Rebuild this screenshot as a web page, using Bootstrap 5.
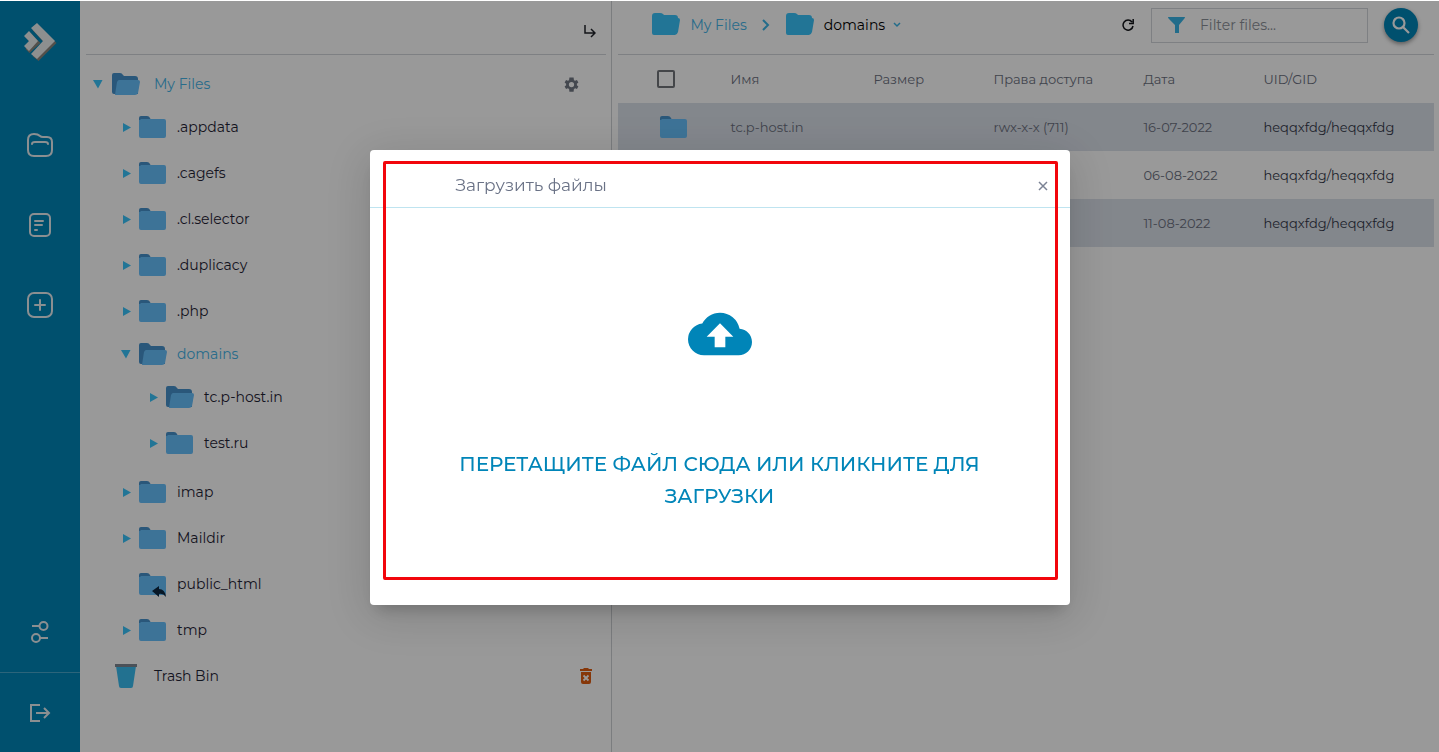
<!DOCTYPE html>
<html lang="ru">
<head>
<meta charset="utf-8">
<meta name="viewport" content="width=device-width, initial-scale=1">
<title>File Manager</title>
<link href="https://cdn.jsdelivr.net/npm/bootstrap@5.3.0/dist/css/bootstrap.min.css" rel="stylesheet">
<style>
:root{--brand:#0085b8;--sky:#3ac4fa;--link:#45b4e8;--ink:#1f2335;--muted:#6b7080;--rule:#d3d6da}
body{font-family:Montserrat,Inter,"Open Sans",sans-serif;font-size:14px;line-height:20px;color:var(--ink);background:#fff}
a{color:inherit;text-decoration:none}
svg{display:block;flex:none}
.app-shell{min-height:100vh;border-top:1px solid #fff}
.rail{width:80px;background:var(--brand);color:#e8eef2;flex:none}
.rail a{display:flex;justify-content:center;align-items:center;height:80px}
.rail .rail-exit{border-top:1px solid #4aa9cd}
.tree-pane{flex:0 0 37%;min-width:0;border-right:1px solid #cdd0d4}
.files-pane{flex:1 1 0;min-width:0;padding:0 5px 0 6px}
.pane-head{height:54px;border-bottom:1px solid var(--rule)}
.tree-pane .pane-head{margin:0 5px 0 6px;padding:8px 10px 0 0}
.tree{padding-top:9px}
.tree-row{display:flex;align-items:center;height:46px}
.tree-row.opened{height:40px;color:var(--link)}
.twist{width:12px;height:12px;padding:0;border:0;background:none;color:var(--sky);flex:none;margin-right:7px}
.folder-ico{margin-right:10px}
.folder-ico.is-open{margin-right:9px}
.root-row{padding:0 32px 0 12px}
.root-row .twist{margin-right:8px}
.root-row .folder-ico{margin-right:13px}
.tree .branch{padding-left:40px}
.tree .sub-branch{padding:0 0 3px 27px}
.trash-row{padding:0 19px 0 35px}
.trash-row a{margin-left:17px}
.icon-btn{border:0;background:none;padding:0;color:inherit}
.crumbs{padding:0 0 6px 34px}
.crumbs a{margin-left:9px}
.crumb-root{color:var(--link)}
.crumb-sep{margin:0 16px 0 15px}
.crumb-here{color:#000;margin-right:8px}
.tools{padding:0 16px 5px 0}
.reload-btn{margin-right:17px}
.filter-box{width:217px;height:35px;border:1px solid var(--rule);padding-left:12px}
.filter-box input{border:0;outline:0;background:none;width:150px;font-size:14px;color:#666}
.filter-box input::placeholder{color:#8b9098;opacity:1}
.search-btn{width:34px;height:34px;border-radius:50%;background:var(--brand);color:#fff;margin-left:16px;box-shadow:0 2px 4px rgba(0,0,0,.4)}
.file-table{width:100%;table-layout:fixed;font-size:13px}
.file-table th{font-weight:400}
.file-table th,.file-table td{height:48px;padding:0;color:var(--muted);vertical-align:middle;white-space:nowrap}
.file-table td:last-child{color:#333849}
.file-table tbody tr:nth-child(odd){background:#dbe1ea}
.file-table .form-check-input{width:18px;height:18px;margin:0 0 0 39px;border:2px solid #72757b;border-radius:2px;display:block}
.row-ico{margin-left:42px}
.c-pick{width:112px}.c-name{width:143px}.c-size,.c-date{width:120px}.c-mode{width:150px}
.shade{position:fixed;inset:1px 0 0;background:rgba(0,0,0,.4)}
.upload-modal{--bs-modal-width:700px;display:block}
.upload-modal .modal-content{border:0;border-radius:4px;margin-top:3px;box-shadow:0 11px 15px -7px rgba(0,0,0,.2),0 9px 46px 8px rgba(0,0,0,.12)}
.upload-modal .modal-header{height:58px;border-bottom:1px solid #bfe4f0;padding:12px 22px 0 86px}
.upload-modal .modal-title{font-size:17px;line-height:24px;font-weight:400;color:#6a7286}
.upload-modal .icon-btn{margin-top:3px}
.drop-area{display:flex;flex-direction:column;align-items:center;width:100%;height:397px;border:0;background:none;padding:94px 80px 0;font-size:20px;line-height:32px;font-weight:500;color:var(--brand)}
.drop-area svg{margin-bottom:82px}
.marker-frame{position:absolute;inset:11px 12px 25px 13px;border:3px solid #f2060c;border-radius:2px;pointer-events:none}
</style>
</head>
<body>
<svg width="0" height="0" class="position-absolute" aria-hidden="true">
<symbol id="folder" viewBox="0 0 28 23"><path fill="#4692cc" d="M2 0h6q2 0 3 2l1 2v8H0V2q0-2 2-2z"/><path fill="#67c0fc" d="M0 4h1l1-1h23q2 0 2 2v15q0 2-2 2H2q-2 0-2-2z"/></symbol>
<symbol id="folder-open" viewBox="0 0 29 23"><path fill="#4692cc" d="M2 0h6q2 0 3 2l1 1h11q3 0 3 3v15H2q-2 0-2-2V2q0-2 2-2z"/><path fill="#67c0fc" d="M7 7h19q2 0 2 2l-2 11q-1 2-3 2H3l2-13q1-2 2-2z"/></symbol>
<symbol id="folder-flat" viewBox="0 0 29 23"><path fill="#3ac4fa" d="M3 0h5q2 0 3 1l1 1h11q3 0 3 3 2 0 2 2l-2 12q-1 3-3 3H2q-2 0-2-2V3q0-3 3-3z"/></symbol>
<symbol id="tri-r" viewBox="0 0 12 12"><path fill="currentColor" d="M3 2l8 4.500-8 4.500z"/></symbol>
<symbol id="tri-d" viewBox="0 0 12 12"><path fill="currentColor" d="M1 2h9.500L6 10.500z"/></symbol>
</svg>
<div class="app-shell d-flex">
  <nav class="rail d-flex flex-column" aria-label="Разделы">
    <a href="#" aria-label="DirectAdmin"><svg width="34" height="40" viewBox="0 0 34 40"><g fill="#8b857e" transform="translate(1.500 2)"><path d="M8 7l6-5 18 18-18 18-6-5 12-13zM1 14l4-5 11 11L5 30l-4-4 5-6z"/></g><g fill="#eceeef"><path d="M8 7l6-5 18 18-18 18-6-5 12-13zM1 15l5-5 9 10-9 10-5-5 5-5z"/></g></svg></a>
    <a href="#" class="mt-4" aria-label="Файлы"><svg width="26" height="24" viewBox="0 0 26 24" fill="none" stroke="currentColor" stroke-width="2" stroke-linecap="round"><path d="M1 7q0-6 6-6 4 0 6 2 1 1 3 1h4q5 0 5 5v8q0 6-6 6H7q-6 0-6-6zM5 11q0-2 3-2h10q3 0 3 2"/></svg></a>
    <a href="#" aria-label="Редактор"><svg width="22" height="24" viewBox="0 0 22 24" fill="none" stroke="currentColor" stroke-width="2" stroke-linecap="round"><rect x="1" y="1" width="20" height="22" rx="4"/><path d="M6 8h8M6 12h7M6 17h2"/></svg></a>
    <a href="#" aria-label="Создать"><svg width="26" height="26" viewBox="0 0 26 26" fill="none" stroke="currentColor" stroke-width="2" stroke-linecap="round"><rect x="1" y="1" width="24" height="24" rx="6"/><path d="M13 8v10M8 13h10"/></svg></a>
    <a href="#" class="mt-auto" aria-label="Настройки"><svg width="18" height="24" viewBox="0 0 18 24" fill="none" stroke="currentColor" stroke-width="2"><circle cx="12.500" cy="6" r="4"/><circle cx="5" cy="18" r="4"/><path d="M1 6h7M9 18h8"/></svg></a>
    <a href="#" class="rail-exit" aria-label="Выход"><svg width="22" height="20" viewBox="0 0 22 20" fill="none" stroke="currentColor" stroke-width="2"><path d="M11 2H2v16h9M7 10h13M15 5l5 5-5 5"/></svg></a>
  </nav>

  <aside class="tree-pane">
    <div class="pane-head d-flex justify-content-end align-items-center">
      <button class="icon-btn" aria-label="Свернуть дерево"><svg width="13" height="13" viewBox="0 0 13 13" fill="none" stroke="#20232a" stroke-width="1.500"><path d="M2 0v8h9M8 4l4 4-4 4"/></svg></button>
    </div>
    <div class="tree">
      <div class="tree-row opened root-row"><button class="twist" aria-label="Свернуть"><svg width="12" height="12"><use href="#tri-d"/></svg></button><svg class="folder-ico is-open" width="29" height="23"><use href="#folder-open"/></svg><a href="#">My Files</a>
        <button class="icon-btn ms-auto" aria-label="Параметры"><svg width="15" height="15" viewBox="2 2 20 20"><path fill="#727884" d="M19.140 12.940a7 7 0 0 0 0-1.880l2.030-1.580-1.920-3.320-2.390.96a7 7 0 0 0-1.620-.94L14.800 2.500H9.200l-.44 3.680a7 7 0 0 0-1.620.94l-2.390-.96-1.920 3.320 2.030 1.580a7 7 0 0 0 0 1.880l-2.030 1.580 1.920 3.320 2.390-.96a7 7 0 0 0 1.620.94l.44 3.680h5.600l.44-3.680a7 7 0 0 0 1.620-.94l2.390.96 1.920-3.320zM12 15.500a3.500 3.500 0 1 1 0-7 3.500 3.500 0 0 1 0 7z"/></svg></button></div>
      <ul class="list-unstyled mb-0 branch">
        <li class="tree-row"><button class="twist" aria-label="Развернуть"><svg width="12" height="12"><use href="#tri-r"/></svg></button><svg class="folder-ico" width="28" height="23"><use href="#folder"/></svg><a href="#">.appdata</a></li>
        <li class="tree-row"><button class="twist" aria-label="Развернуть"><svg width="12" height="12"><use href="#tri-r"/></svg></button><svg class="folder-ico" width="28" height="23"><use href="#folder"/></svg><a href="#">.cagefs</a></li>
        <li class="tree-row"><button class="twist" aria-label="Развернуть"><svg width="12" height="12"><use href="#tri-r"/></svg></button><svg class="folder-ico" width="28" height="23"><use href="#folder"/></svg><a href="#">.cl.selector</a></li>
        <li class="tree-row"><button class="twist" aria-label="Развернуть"><svg width="12" height="12"><use href="#tri-r"/></svg></button><svg class="folder-ico" width="28" height="23"><use href="#folder"/></svg><a href="#">.duplicacy</a></li>
        <li class="tree-row"><button class="twist" aria-label="Развернуть"><svg width="12" height="12"><use href="#tri-r"/></svg></button><svg class="folder-ico" width="28" height="23"><use href="#folder"/></svg><a href="#">.php</a></li>
        <li><div class="tree-row opened"><button class="twist" aria-label="Свернуть"><svg width="12" height="12"><use href="#tri-d"/></svg></button><svg class="folder-ico is-open" width="29" height="23"><use href="#folder-open"/></svg><a href="#">domains</a></div>
          <ul class="list-unstyled mb-0 sub-branch">
            <li class="tree-row"><button class="twist" aria-label="Развернуть"><svg width="12" height="12"><use href="#tri-r"/></svg></button><svg class="folder-ico is-open" width="29" height="23"><use href="#folder-open"/></svg><a href="#">tc.p-host.in</a></li>
            <li class="tree-row"><button class="twist" aria-label="Развернуть"><svg width="12" height="12"><use href="#tri-r"/></svg></button><svg class="folder-ico" width="28" height="23"><use href="#folder"/></svg><a href="#">test.ru</a></li>
          </ul></li>
        <li class="tree-row"><button class="twist" aria-label="Развернуть"><svg width="12" height="12"><use href="#tri-r"/></svg></button><svg class="folder-ico" width="28" height="23"><use href="#folder"/></svg><a href="#">imap</a></li>
        <li class="tree-row"><button class="twist" aria-label="Развернуть"><svg width="12" height="12"><use href="#tri-r"/></svg></button><svg class="folder-ico" width="28" height="23"><use href="#folder"/></svg><a href="#">Maildir</a></li>
        <li class="tree-row"><span class="twist"></span><svg class="folder-ico" width="28" height="25" viewBox="0 -1 28 25"><use href="#folder" width="28" height="23"/><path fill="#0c2740" d="M13 18l7-5v3q6 0 7 8-3-4-7-3v3z"/></svg><a href="#">public_html</a></li>
        <li class="tree-row"><button class="twist" aria-label="Развернуть"><svg width="12" height="12"><use href="#tri-r"/></svg></button><svg class="folder-ico" width="28" height="23"><use href="#folder"/></svg><a href="#">tmp</a></li>
      </ul>
      <div class="tree-row trash-row"><svg width="22" height="24" viewBox="0 0 22 24"><path fill="#3abdf0" d="M1 2h20l-3 20q0 2-2 2H6q-2 0-2-2z"/><path fill="#7d8793" d="M0 0h22v3H0z"/></svg><a href="#">Trash Bin</a>
        <button class="icon-btn ms-auto" aria-label="Очистить корзину"><svg width="12" height="17" viewBox="0 0 12 17"><path fill="#e05c10" d="M0 1h3l1-1h4l1 1h3v2H0zM1 4h10v10q0 2-2 2H3q-2 0-2-2z"/><path stroke="#fff" stroke-width="1.800" d="M3.500 7.500l5 5m0-5l-5 5"/></svg></button></div>
    </div>
  </aside>

  <main class="files-pane">
    <div class="pane-head d-flex align-items-center">
      <div class="crumbs d-flex align-items-center">
        <svg width="29" height="23"><use href="#folder-flat"/></svg><a class="crumb-root" href="#">My Files</a>
        <svg class="crumb-sep" width="8" height="12" viewBox="0 0 8 12" fill="none" stroke="#3ab5e6" stroke-width="2"><path d="M1 1l5 5-5 5"/></svg>
        <svg width="29" height="23"><use href="#folder-flat"/></svg><a class="crumb-here" href="#">domains</a>
        <svg width="8" height="6" viewBox="0 0 8 6" fill="none" stroke="#3ab5e6" stroke-width="1.500"><path d="M1 1l3 3 3-3"/></svg>
      </div>
      <div class="tools d-flex align-items-center ms-auto">
        <button class="icon-btn reload-btn" aria-label="Обновить"><svg width="12" height="12" viewBox="0 0 12 12" fill="none" stroke="#101217" stroke-width="1.500"><path d="M10 3a5 5 0 1 0 1 4M11.200 0v4.500H7"/></svg></button>
        <label class="filter-box d-flex align-items-center"><svg width="24" height="24" viewBox="0 0 24 24"><path fill="#3ab5e6" d="M4 4h17q0 1-1 2l-5 6v8h-4v-8L5 6Q4 5 4 4z"/></svg><input type="text" placeholder="Filter files..." aria-label="Filter files" class="ms-2 ps-1"></label>
        <button class="icon-btn search-btn d-flex justify-content-center align-items-center" aria-label="Поиск"><svg width="18" height="18" viewBox="0 0 18 18" fill="none" stroke="currentColor" stroke-width="2.200"><circle cx="7" cy="7" r="5.500"/><path d="M11 11l6 6"/></svg></button>
      </div>
    </div>
    <table class="file-table">
      <colgroup><col class="c-pick"><col class="c-name"><col class="c-size"><col class="c-mode"><col class="c-date"><col></colgroup>
      <thead><tr><th><input class="form-check-input" type="checkbox" aria-label="Выбрать все"></th><th>Имя</th><th>Размер</th><th>Права доступа</th><th>Дата</th><th>UID/GID</th></tr></thead>
      <tbody>
        <tr><td><svg class="row-ico" width="28" height="23"><use href="#folder"/></svg></td><td>tc.p-host.in</td><td></td><td>rwx-x-x (711)</td><td>16-07-2022</td><td>heqqxfdg/heqqxfdg</td></tr>
        <tr><td></td><td></td><td></td><td></td><td>06-08-2022</td><td>heqqxfdg/heqqxfdg</td></tr>
        <tr><td></td><td></td><td></td><td></td><td>11-08-2022</td><td>heqqxfdg/heqqxfdg</td></tr>
      </tbody>
    </table>
  </main>
</div>
<div class="shade"></div>
<div class="modal upload-modal" tabindex="-1" role="dialog" aria-labelledby="upload-title">
  <div class="modal-dialog modal-dialog-centered">
    <div class="modal-content">
      <div class="modal-header">
        <h1 class="modal-title" id="upload-title">Загрузить файлы</h1>
        <button class="icon-btn" aria-label="Закрыть"><svg width="10" height="10" viewBox="0 0 10 10" stroke="#7b8294" stroke-width="1.500"><path d="M1 1l8 8M9 1L1 9"/></svg></button>
      </div>
      <button class="drop-area"><svg width="64" height="64" viewBox="0 0 24 24"><path fill="#0085b8" d="M19.350 10.040A7.490 7.490 0 0 0 12 4C9.110 4 6.600 5.640 5.350 8.040A5.994 5.994 0 0 0 0 14c0 3.310 2.690 6 6 6h13c2.760 0 5-2.240 5-5 0-2.640-2.050-4.780-4.650-4.960zM14 13v4h-4v-4H7l5-5 5 5h-3z"/></svg>ПЕРЕТАЩИТЕ ФАЙЛ СЮДА ИЛИ КЛИКНИТЕ ДЛЯ ЗАГРУЗКИ</button>
      <div class="marker-frame"></div>
    </div>
  </div>
</div>
<script src="https://cdn.jsdelivr.net/npm/bootstrap@5.3.0/dist/js/bootstrap.bundle.min.js"></script>
</body>
</html>
